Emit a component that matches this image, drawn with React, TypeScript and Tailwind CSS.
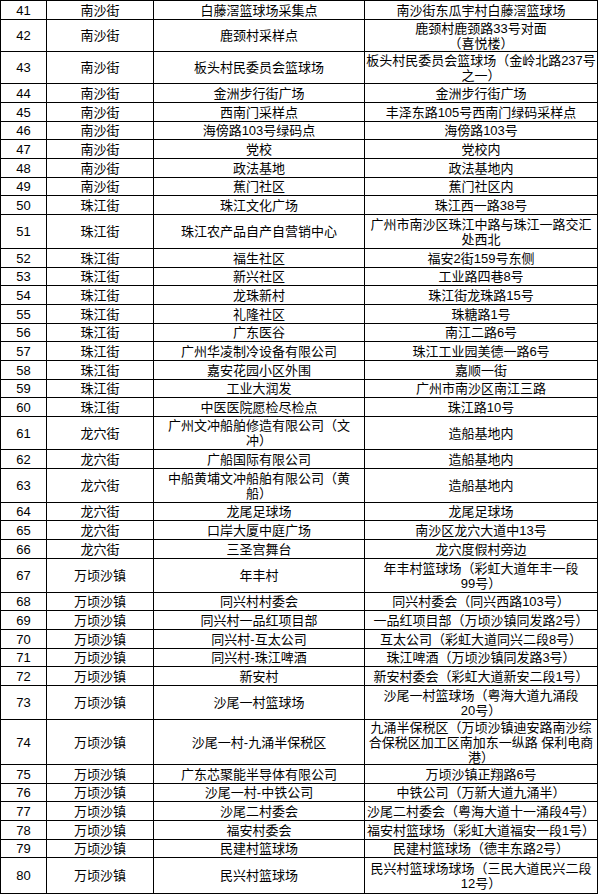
import React from 'react'

type Row = {
  no: number
  town: string
  site: string[]
  addr: string[]
  h: string
}

const rows: Row[] = [
  { no: 41, town: '南沙街', site: ['白藤滘篮球场采集点'], addr: ['南沙街东瓜宇村白藤滘篮球场'], h: 'h-[19px]' },
  { no: 42, town: '南沙街', site: ['鹿颈村采样点'], addr: ['鹿颈村鹿颈路33号对面', '（喜悦楼）'], h: 'h-[32px]' },
  { no: 43, town: '南沙街', site: ['板头村民委员会篮球场'], addr: ['板头村民委员会篮球场（金岭北路237号', '之一）'], h: 'h-[32px]' },
  { no: 44, town: '南沙街', site: ['金洲步行街广场'], addr: ['金洲步行街广场'], h: 'h-[19px]' },
  { no: 45, town: '南沙街', site: ['西南门采样点'], addr: ['丰泽东路105号西南门绿码采样点'], h: 'h-[19px]' },
  { no: 46, town: '南沙街', site: ['海傍路103号绿码点'], addr: ['海傍路103号'], h: 'h-[18px]' },
  { no: 47, town: '南沙街', site: ['党校'], addr: ['党校内'], h: 'h-[19px]' },
  { no: 48, town: '南沙街', site: ['政法基地'], addr: ['政法基地内'], h: 'h-[19px]' },
  { no: 49, town: '南沙街', site: ['蕉门社区'], addr: ['蕉门社区内'], h: 'h-[18px]' },
  { no: 50, town: '珠江街', site: ['珠江文化广场'], addr: ['珠江西一路38号'], h: 'h-[19px]' },
  { no: 51, town: '珠江街', site: ['珠江农产品自产自营销中心'], addr: ['广州市南沙区珠江中路与珠江一路交汇', '处西北'], h: 'h-[34px]' },
  { no: 52, town: '珠江街', site: ['福生社区'], addr: ['福安2街159号东侧'], h: 'h-[19px]' },
  { no: 53, town: '珠江街', site: ['新兴社区'], addr: ['工业路四巷8号'], h: 'h-[18px]' },
  { no: 54, town: '珠江街', site: ['龙珠新村'], addr: ['珠江街龙珠路15号'], h: 'h-[19px]' },
  { no: 55, town: '珠江街', site: ['礼隆社区'], addr: ['珠糖路1号'], h: 'h-[19px]' },
  { no: 56, town: '珠江街', site: ['广东医谷'], addr: ['南江二路6号'], h: 'h-[18px]' },
  { no: 57, town: '珠江街', site: ['广州华凌制冷设备有限公司'], addr: ['珠江工业园美德一路6号'], h: 'h-[19px]' },
  { no: 58, town: '珠江街', site: ['嘉安花园小区外围'], addr: ['嘉顺一街'], h: 'h-[19px]' },
  { no: 59, town: '珠江街', site: ['工业大润发'], addr: ['广州市南沙区南江三路'], h: 'h-[18px]' },
  { no: 60, town: '珠江街', site: ['中医医院愿检尽检点'], addr: ['珠江路10号'], h: 'h-[19px]' },
  { no: 61, town: '龙穴街', site: ['广州文冲船舶修造有限公司（文', '冲）'], addr: ['造船基地内'], h: 'h-[33px]' },
  { no: 62, town: '龙穴街', site: ['广船国际有限公司'], addr: ['造船基地内'], h: 'h-[19px]' },
  { no: 63, town: '龙穴街', site: ['中船黄埔文冲船舶有限公司（黄', '船）'], addr: ['造船基地内'], h: 'h-[34px]' },
  { no: 64, town: '龙穴街', site: ['龙尾足球场'], addr: ['龙尾足球场'], h: 'h-[18px]' },
  { no: 65, town: '龙穴街', site: ['口岸大厦中庭广场'], addr: ['南沙区龙穴大道中13号'], h: 'h-[19px]' },
  { no: 66, town: '龙穴街', site: ['三圣宫舞台'], addr: ['龙穴度假村旁边'], h: 'h-[19px]' },
  { no: 67, town: '万顷沙镇', site: ['年丰村'], addr: ['年丰村篮球场（彩虹大道年丰一段', '99号）'], h: 'h-[34px]' },
  { no: 68, town: '万顷沙镇', site: ['同兴村村委会'], addr: ['同兴村委会（同兴西路103号）'], h: 'h-[18px]' },
  { no: 69, town: '万顷沙镇', site: ['同兴村一品红项目部'], addr: ['一品红项目部（万顷沙镇同发路2号）'], h: 'h-[19px]' },
  { no: 70, town: '万顷沙镇', site: ['同兴村-互太公司'], addr: ['互太公司（彩虹大道同兴二段8号）'], h: 'h-[19px]' },
  { no: 71, town: '万顷沙镇', site: ['同兴村-珠江啤酒'], addr: ['珠江啤酒（万顷沙镇同发路3号）'], h: 'h-[18px]' },
  { no: 72, town: '万顷沙镇', site: ['新安村'], addr: ['新安村委会（彩虹大道新安二段1号）'], h: 'h-[19px]' },
  { no: 73, town: '万顷沙镇', site: ['沙尾一村篮球场'], addr: ['沙尾一村篮球场（粤海大道九涌段', '20号）'], h: 'h-[34px]' },
  {
    no: 74,
    town: '万顷沙镇',
    site: ['沙尾一村-九涌半保税区'],
    addr: ['九涌半保税区（万顷沙镇迪安路南沙综', '合保税区加工区南加东一纵路 保利电商', '港）'],
    h: 'h-[45px]',
  },
  { no: 75, town: '万顷沙镇', site: ['广东芯聚能半导体有限公司'], addr: ['万顷沙镇正翔路6号'], h: 'h-[19px]' },
  { no: 76, town: '万顷沙镇', site: ['沙尾一村-中铁公司'], addr: ['中铁公司（万新大道九涌半）'], h: 'h-[18px]' },
  { no: 77, town: '万顷沙镇', site: ['沙尾二村委会'], addr: ['沙尾二村委会（粤海大道十一涌段4号）'], h: 'h-[19px]' },
  { no: 78, town: '万顷沙镇', site: ['福安村委会'], addr: ['福安村篮球场（彩虹大道福安一段1号）'], h: 'h-[19px]' },
  { no: 79, town: '万顷沙镇', site: ['民建村篮球场'], addr: ['民建村篮球场（德丰东路2号）'], h: 'h-[18px]' },
  { no: 80, town: '万顷沙镇', site: ['民兴村篮球场'], addr: ['民兴村篮球场球场（三民大道民兴二段', '12号）'], h: 'h-[36px]' },
]

function Cell({ lines }: { lines: string[] }) {
  return (
    <div className="flex flex-col items-center justify-center overflow-hidden border-r border-b border-black leading-[15px]">
      {lines.map((l, i) => (
        <span key={i} className="whitespace-nowrap">
          {l}
        </span>
      ))}
    </div>
  )
}

export default function App() {
  return (
    <div className="w-[598px] bg-white">
      <div className="border-t border-l border-black text-[13px] text-black font-['Liberation_Sans','Noto_Sans_CJK_SC',sans-serif]">
        {rows.map(r => (
          <div key={r.no} className={`grid grid-cols-[46px_107px_211px_233px] ${r.h}`}>
            <Cell lines={[String(r.no)]} />
            <Cell lines={[r.town]} />
            <Cell lines={r.site} />
            <Cell lines={r.addr} />
          </div>
        ))}
      </div>
    </div>
  )
}
